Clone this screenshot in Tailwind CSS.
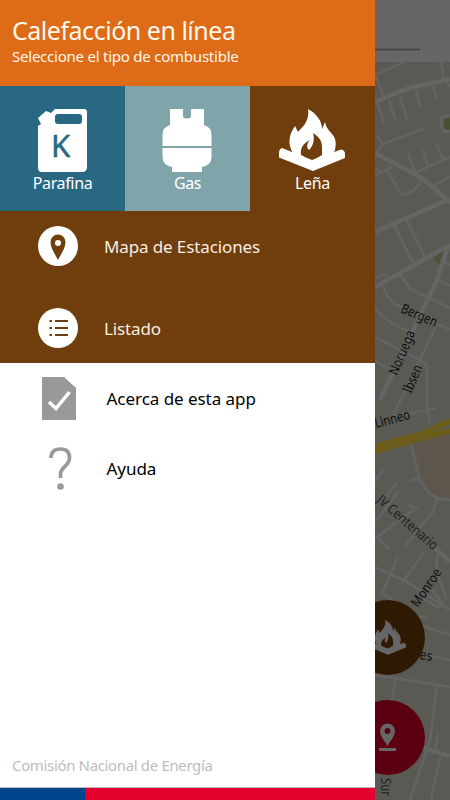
<!DOCTYPE html>
<html lang="es">
<head>
    <meta charset="UTF-8">
    <meta name="viewport" content="width=device-width, initial-scale=1.0">
    <title>Calefacción en línea</title>
    <script src="https://cdn.jsdelivr.net/npm/@tailwindcss/browser@4"></script>
</head>
<body class="flex h-[800px] w-[450px] overflow-hidden bg-white font-['Noto_Sans',sans-serif]">

    <!-- Menú lateral -->
    <aside class="flex w-[375px] shrink-0 flex-col bg-white">

        <header class="h-[86px] bg-[#de6b17] pl-3 pt-[13px] whitespace-nowrap text-[#fff8ee]">
            <h1 class="text-[25px] leading-[34px] tracking-[-0.48px]">Calefacción en línea</h1>
            <p class="text-[15px] leading-[18px] tracking-[-0.23px]">Seleccione el tipo de combustible</p>
        </header>

        <!-- Tipos de combustible -->
        <nav class="grid h-[125px] grid-cols-3 text-center text-base leading-[22px] tracking-[-0.35px] text-white">
            <a class="flex flex-col items-center bg-[#286883] pt-[23px]">
                <svg width="50" height="63" viewBox="0 0 50 63">
                    <path fill="#fff" fill-rule="evenodd" d="M17 0H46Q49 0 49 3V58Q49 63 44 63H4Q0 63 0 59V17L3 15L0 9L8 2L13 4ZM20 5Q17 5 17 8V12Q17 15 20 15H41Q44 15 44 12V8Q44 5 41 5Z"/>
                    <text x="13" y="48" font-family="Noto Sans" font-size="31" fill="#286883" stroke="#286883" stroke-width=".5">K</text>
                </svg>
                <span>Parafina</span>
            </a>
            <a class="flex flex-col items-center bg-[#7fa5aa] pt-[23px]">
                <svg class="mr-px" width="50" height="63" viewBox="0 0 50 63" fill="#fff">
                    <path d="M8 0H21V7Q21 9.500 25 9.500Q29 9.500 29 7V0H42V16Q49.500 18 49.500 26V37H.5V26Q.5 18 8 16Z"/>
                    <path d="M.5 39H49.500V48Q49.500 56 40 58V63H10V58Q.5 56 .5 48Z"/>
                </svg>
                <span>Gas</span>
            </a>
            <a class="flex flex-col items-center bg-[#703d0c] pt-[23px]">
                <svg class="mr-0.5" width="66" height="63" viewBox="0 0 66 63">
                    <path fill="#fff" d="M14 44C9 36 9 27 16 17L19 23C22 19 31 13 29 0C38 5 43 12 43 20L46 13C48 25 60 24 56 41L52 49L32 56L14 47Z"/>
                    <path fill="#703d0c" d="M22 46C21 38 25 34 31 31C27 35 28 39 30 41C34 37 36 31 34 24C39 27 43 31 43 38V46L33 52Z"/>
                    <path fill="#fff" d="M3 39L33 51L62 40.500Q66 41 66 45V49L34 62L0 48.500V44Q0 40 3 39Z"/>
                </svg>
                <span>Leña</span>
            </a>
        </nav>

        <!-- Opciones del combustible elegido -->
        <ul class="h-[152px] bg-[#703d0c] text-[17px] leading-6 tracking-[-0.12px] text-[#f8eee4]">
            <li class="flex h-[70px] items-center pl-[38px]">
                <svg width="40" height="40" viewBox="0 0 40 40">
                    <circle cx="20" cy="20" r="20" fill="#fff"/>
                    <path fill="#703d0c" fill-rule="evenodd" d="M20 34C17 28 12.500 22 12.500 16A7.500 7.500 0 0 1 27.500 16C27.500 22 23 28 20 34ZM20 14A3 3 0 1 0 20 20A3 3 0 1 0 20 14Z"/>
                </svg>
                <span class="pt-0.5 pl-[26px]">Mapa de Estaciones</span>
            </li>
            <li class="flex h-[81px] items-center pt-[13px] pl-[38px]">
                <svg width="40" height="40" viewBox="0 0 40 40">
                    <circle cx="20" cy="20" r="20" fill="#fff"/>
                    <path stroke="#703d0c" stroke-width="2" d="M11.500 13H14M17 13H30M11.500 20H14M17 20H30M11.500 27H14M17 27H30"/>
                </svg>
                <span class="pt-0.5 pl-[26px]">Listado</span>
            </li>
        </ul>

        <ul class="grow text-[17px] leading-6 tracking-[-0.04px] text-black">
            <li class="flex h-[70px] items-center pl-[42px]">
                <svg width="34" height="43" viewBox="0 0 34 43">
                    <path fill="#999" d="M0 0H22L34 11V43H0Z"/>
                    <path fill="none" stroke="#fff" stroke-width="3.500" d="M7 25L14 31.500L27.500 15"/>
                </svg>
                <span class="pt-0.5 pl-[30.500px]">Acerca de esta app</span>
            </li>
            <li class="flex h-[70px] items-center pl-[42px]">
                <svg width="34" height="43" viewBox="0 0 34 43">
                    <path fill="none" stroke="#999" stroke-width="3.700" d="M9 11Q9 2 18.500 2Q27.500 2 27.500 11C27.500 19 18.500 20 18.500 27V31"/>
                    <circle cx="18.500" cy="39.500" r="3.300" fill="#999"/>
                </svg>
                <span class="pt-0.5 pl-[30.500px]">Ayuda</span>
            </li>
        </ul>

        <footer>
            <p class="h-[34px] pl-3 text-[15px] leading-6 tracking-[-0.35px] text-[#bdbdbd]">Comisión Nacional de Energía</p>
            <div class="flex h-[13px] border-t border-[#bbb]">
                <div class="w-[85px] bg-[#00468c]"></div>
                <div class="grow bg-[#e4002c]"></div>
            </div>
        </footer>
    </aside>

    <!-- Mapa oscurecido detrás del menú -->
    <main class="w-[75px] shrink-0">
        <svg class="block" width="75" height="800" viewBox="375 0 75 800">
            <rect x="375" width="75" height="800" fill="#595a53"/>
            <path fill="#5c564d" d="M411 443L420 480L437 498L450 500V429L430 435Z"/>
            <path fill="#46522f" d="M445 118H450V130H446L444 127V121Z"/>
            <path fill="#4c5538" d="M433 258L444 250L439 265Z"/>

            <g fill="none" stroke="#636362" stroke-width="2.800">
                <path d="M375 75L405 62M376 76L384 98M441 62L444 80M378 104L384 123M389 100L395 119M400 97L407 119M416 90L420 107M433 86L437 100M446 80L450 87"/>
                <path d="M450 115L443 117Q440 119 441 124L443 130Q444 132 450 131"/>
                <path d="M423 129L383 144L377 135M383 144L377 153M375 176L392 167M375 167L380 172M387 171L402 195Q414 194 420 183"/>
                <path d="M408 153L415 172M423 150L428 165M437 145L443 159M415 173L450 157M433 186L450 177"/>
                <path d="M393 223L413 263M405 217L425 257M375 279Q383 271 390 278M400 274L410 289L450 308M382 283Q386 298 395 304L450 330M435 278L450 286M443 261L450 265"/>
                <path d="M375 308Q385 322 410 332M375 337L420 360Q427 363 427 370L427 405L430 425M437 324L393 416M375 361L390 369M393 417L437 408"/>
                <path d="M411 445L420 480L428 492L437 498L450 500M437 498L433 512L405 546M410 481L421 478M384 470L375 480M397 482L386 497M399 491L376 521M408 505L416 508L377 537L390 550M424 552L401 585M375 567L407 582L450 610M398 557L382 593L400 605M438 552L436 570L447 600"/>
                <path d="M420 597L436 606Q442 608 442 602L432 590M411 617H428M420 625L450 635M420 654L450 660M375 675L450 687M396 677L391 707M437 686L430 740L410 800M440 757L431 800M438 734L435 750"/>
            </g>
            <g fill="none" stroke="#656565" stroke-width="4.500">
                <path d="M375 103Q386 96 413 87L450 79M375 153L413 173Q430 183 450 203M375 232L450 199M375 287L450 245M448 247L437 280L380 400M435 548L450 562M423 748L450 756"/>
            </g>
            <g fill="none" stroke="#6c5c1b">
                <path stroke-width="10" d="M375 449L425 435"/>
                <path stroke-width="6" d="M420 435L450 421M420 438L450 431"/>
            </g>

            <g font-family="Noto Sans" font-size="13.500" fill="#0c0c0c">
                <text transform="translate(400 312) rotate(23)" textLength="38" lengthAdjust="spacingAndGlyphs">Bergen</text>
                <text transform="translate(397 376) rotate(-67)" textLength="47" lengthAdjust="spacingAndGlyphs">Noruega</text>
                <text transform="translate(411 394) rotate(-67)" textLength="29" lengthAdjust="spacingAndGlyphs">Ibsen</text>
                <text transform="translate(376 428) rotate(-15)" textLength="36" lengthAdjust="spacingAndGlyphs">Linneo</text>
                <text transform="translate(376 501) rotate(41)" textLength="76" lengthAdjust="spacingAndGlyphs" fill="#222">JV Centenario</text>
                <text transform="translate(418 608) rotate(-56)" textLength="43" lengthAdjust="spacingAndGlyphs">Monroe</text>
                <text transform="translate(419 659) rotate(8)" textLength="13" lengthAdjust="spacingAndGlyphs">es</text>
                <text transform="translate(381 778) rotate(90)" textLength="18" lengthAdjust="spacingAndGlyphs" fill="#222">Sur</text>
            </g>

            <!-- Botones flotantes -->
            <circle cx="387.500" cy="637.500" r="37.500" fill="#2e1903"/>
            <g transform="translate(369 620) scale(.56)">
                <path fill="#666" d="M14 44C9 36 9 27 16 17L19 23C22 19 31 13 29 0C38 5 43 12 43 20L46 13C48 25 60 24 56 41L52 49L32 56L14 47Z"/>
                <path fill="#2e1903" d="M22 46C21 38 25 34 31 31C27 35 28 39 30 41C34 37 36 31 34 24C39 27 43 31 43 38V46L33 52Z"/>
                <path fill="#666" d="M3 39L33 51L62 40.500Q66 41 66 45V49L34 62L0 48.500V44Q0 40 3 39Z"/>
            </g>
            <circle cx="387.500" cy="737.500" r="37.500" fill="#5b0011"/>
            <path fill="#666" fill-rule="evenodd" d="M387.500 746C384 740 380 736 380 731A7.500 7.500 0 0 1 395 731C395 736 391 740 387.500 746ZM387.500 728A3 3 0 1 0 387.500 734A3 3 0 1 0 387.500 728ZM379 748H396V751H379Z"/>

            <!-- Barra de búsqueda -->
            <rect x="375" width="75" height="62" fill="#666"/>
            <path stroke="#414141" stroke-width="1.500" d="M375 49.500H420"/>
        </svg>
    </main>

</body>
</html>
